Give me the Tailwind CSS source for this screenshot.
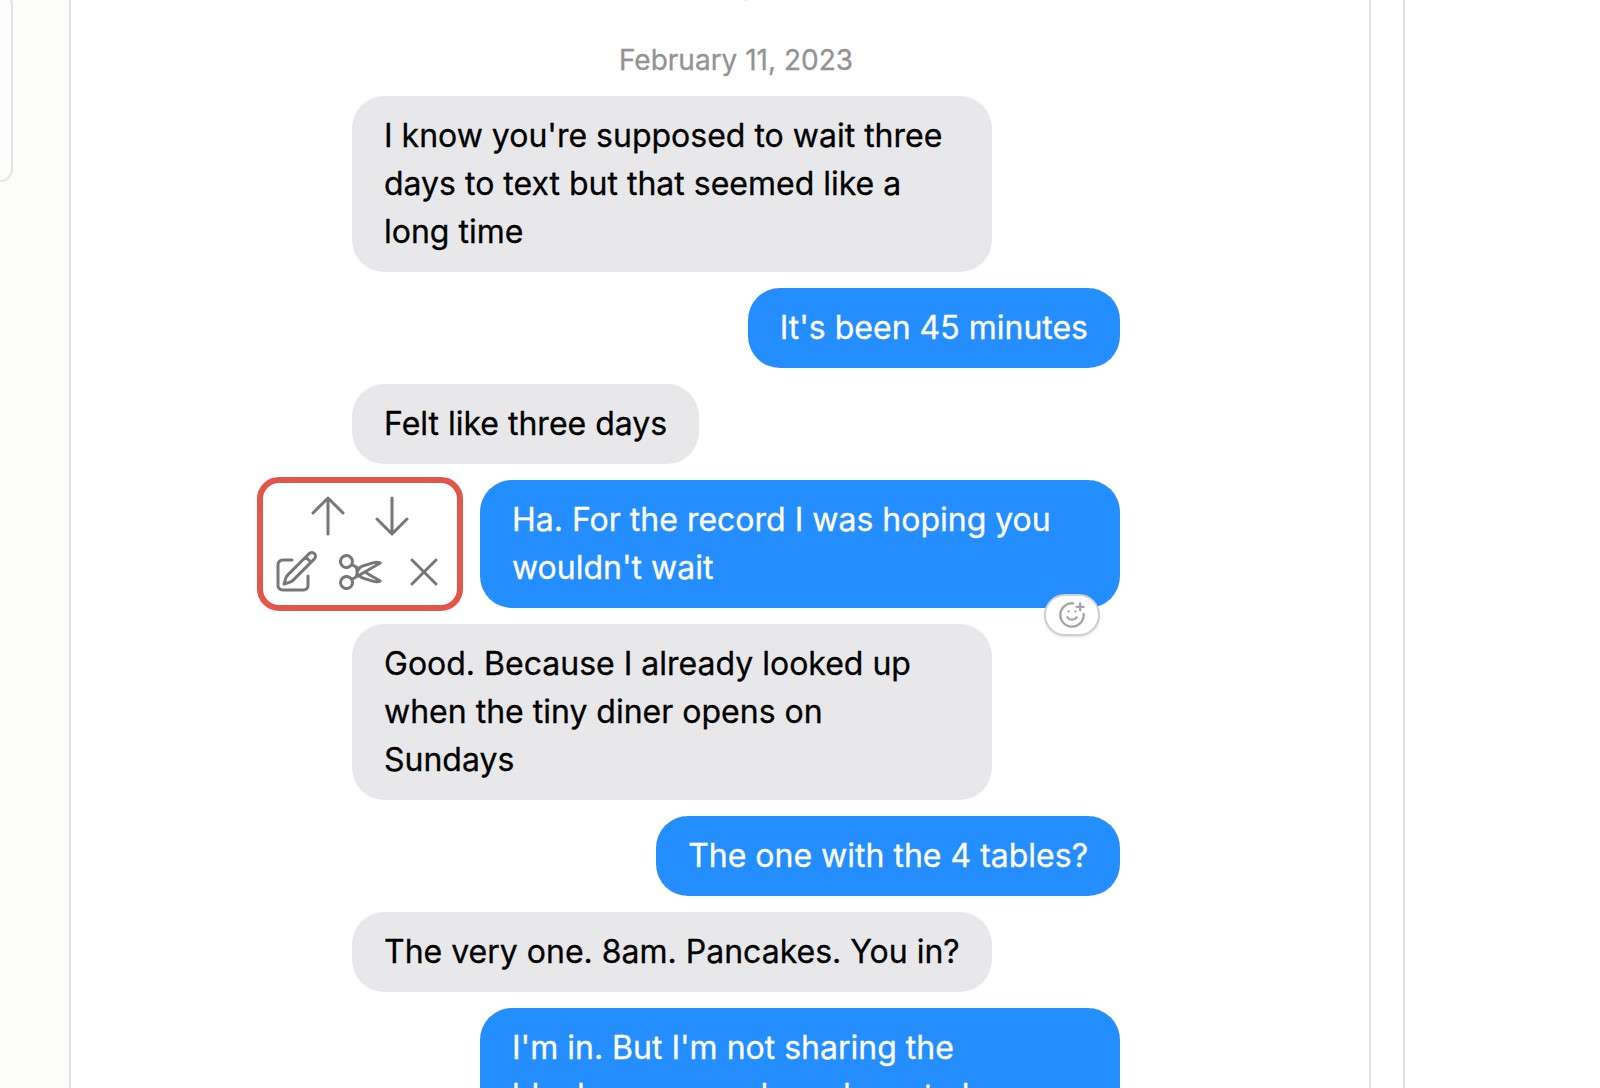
<!DOCTYPE html>
<html lang="en">
<head>
<meta charset="utf-8">
<title>Conversation editor</title>
<script src="https://cdn.jsdelivr.net/npm/@tailwindcss/browser@4"></script>
</head>
<body class="flex h-screen overflow-hidden bg-white font-[Inter,sans-serif] text-[32px] leading-[48px] text-black [-webkit-text-stroke:0.3px]">
  <aside class="w-[71px] shrink-0 border-r-2 border-[#e1e1e3] bg-[#fcfcfa]">
    <div class="-mt-2 h-[190px] w-[13px] rounded-r-[16px] border-2 border-l-0 border-[#e4e4e7]"></div>
  </aside>
  <main class="flex w-[1300px] shrink-0 justify-center overflow-hidden border-r-2 border-[#e1e1e3]">
    <section class="ml-8 flex h-[1200px] w-[768px] shrink-0 flex-col gap-4">
      <header class="-mt-[37px] flex h-[117px] shrink-0 flex-col text-center text-[28px] leading-[42px] text-[#939393]">
        <div>Morgan</div>
        <div class="mt-[34px]">February 11, 2023</div>
      </header>
      <div class="w-[640px] shrink-0 rounded-[32px] bg-[#e8e8ea] px-8 py-4">I know you're supposed to wait three days to text but that seemed like a long time</div>
      <div class="shrink-0 self-end rounded-[32px] bg-[#248eff] px-8 py-4 text-white">It's been 45 minutes</div>
      <div class="shrink-0 self-start rounded-[32px] bg-[#e8e8ea] px-8 py-4">Felt like three days</div>
      <div class="relative w-[640px] shrink-0 self-end rounded-[32px] bg-[#248eff] px-8 py-4 text-white">Ha. For the record I was hoping you wouldn't wait
        <div class="absolute -top-[3px] -left-[223px] flex h-[134px] w-[206px] flex-col justify-center gap-2 rounded-[22px] border-6 border-[#e2574c] bg-white text-[#77777b]">
          <div class="flex justify-center gap-4">
            <svg class="size-12" viewBox="0 0 24 24" fill="none" stroke="currentColor" stroke-width="1.5" stroke-linecap="round" stroke-linejoin="round"><path d="M4.500 10.500 12 3m0 0 7.500 7.500M12 3v18"/></svg>
            <svg class="size-12" viewBox="0 0 24 24" fill="none" stroke="currentColor" stroke-width="1.5" stroke-linecap="round" stroke-linejoin="round"><path d="M19.500 13.500 12 21m0 0-7.500-7.500M12 21V3"/></svg>
          </div>
          <div class="flex justify-center gap-4">
            <svg class="size-12" viewBox="0 0 24 24" fill="none" stroke="currentColor" stroke-width="1.5" stroke-linecap="round" stroke-linejoin="round"><path d="m16.862 4.487 1.687-1.688a1.875 1.875 0 1 1 2.652 2.652L10.582 16.070a4.500 4.500 0 0 1-1.897 1.130L6 18l.8-2.685a4.500 4.500 0 0 1 1.130-1.897l8.932-8.931Zm0 0L19.500 7.125M18 14v4.750A2.250 2.250 0 0 1 15.750 21H5.250A2.250 2.250 0 0 1 3 18.750V8.250A2.250 2.250 0 0 1 5.250 6H10"/></svg>
            <svg class="size-12" viewBox="0 0 24 24" fill="none" stroke="currentColor" stroke-width="1.5" stroke-linecap="round" stroke-linejoin="round"><path d="m7.848 8.250 1.536.887M7.848 8.250a3 3 0 1 1-5.196-3 3 3 0 0 1 5.196 3Zm1.536.887a2.165 2.165 0 0 1 1.083 1.839c.005.351.054.695.140 1.024M9.384 9.137l2.077 1.199M7.848 15.750l1.536-.887m-1.536.887a3 3 0 1 1-5.196 3 3 3 0 0 1 5.196-3Zm1.536-.887a2.165 2.165 0 0 0 1.083-1.838c.005-.352.054-.695.140-1.025m-1.223 2.863 2.077-1.199m0-3.328a4.323 4.323 0 0 1 2.068-1.379l5.325-1.628a4.500 4.500 0 0 1 2.480-.044l.803.215-7.794 4.500m-2.882-1.664A4.330 4.330 0 0 0 10.607 12m3.736 0 7.794 4.500-.802.215a4.500 4.500 0 0 1-2.480-.043l-5.326-1.629a4.324 4.324 0 0 1-2.068-1.379M14.343 12l-2.882 1.664"/></svg>
            <svg class="size-12" viewBox="0 0 24 24" fill="none" stroke="currentColor" stroke-width="1.5" stroke-linecap="round" stroke-linejoin="round"><path d="M6 18 18 6M6 6l12 12"/></svg>
          </div>
        </div>
        <div class="absolute right-5 -bottom-[28px] flex h-[42px] w-14 items-center justify-center rounded-full border-2 border-[#d0d0d4] bg-white text-[#a5a5a7] shadow-sm">
          <svg class="size-7" viewBox="0 0 24 24" fill="none" stroke="currentColor" stroke-width="2" stroke-linecap="round" stroke-linejoin="round"><path d="M22 11v1a10 10 0 1 1-9-10M8 14s1.500 2 4 2 4-2 4-2M9 9h.01M15 9h.01M16 5h6M19 2v6"/></svg>
        </div>
      </div>
      <div class="w-[640px] shrink-0 rounded-[32px] bg-[#e8e8ea] px-8 py-4">Good. Because I already looked up when the tiny diner opens on Sundays</div>
      <div class="shrink-0 self-end rounded-[32px] bg-[#248eff] px-8 py-4 text-white">The one with the 4 tables?</div>
      <div class="w-[640px] shrink-0 rounded-[32px] bg-[#e8e8ea] px-8 py-4">The very one. 8am. Pancakes. You in?</div>
      <div class="w-[640px] shrink-0 self-end rounded-[32px] bg-[#248eff] px-8 py-4 text-white">I'm in. But I'm not sharing the blueberry pancakes, down to be</div>
    </section>
  </main>
  <aside class="ml-8 flex-1 border-l-2 border-[#e1e1e3]"></aside>
</body>
</html>
